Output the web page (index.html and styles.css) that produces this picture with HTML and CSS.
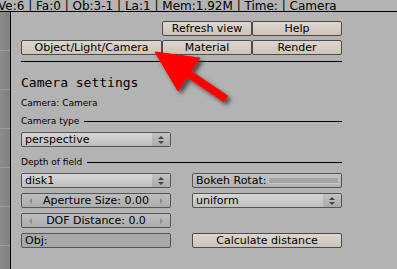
FILE: index.html
```html
<!DOCTYPE html>
<html>
  <head>
    <title>Camera settings</title>
    <link rel="stylesheet" href="styles.css">
  </head>
  <body>
    <div class="screen">
      <div class="info">Ve:6 | Fa:0 | Ob:3-1 | La:1 | Mem:1.92M | Time: | Camera</div>
      <div class="main">
        <div class="sidebar"></div>
        <div class="panel">
          <div class="row row-right">
            <button class="btn btn-90">Refresh view</button>
            <button class="btn btn-90">Help</button>
          </div>
          <div class="row">
            <button class="btn btn-wide">Object/Light/Camera</button>
            <button class="btn btn-90">Material</button>
            <button class="btn btn-90">Render</button>
          </div>
          <div class="rule"></div>
          <div class="heading">Camera settings</div>
          <div class="caption">Camera: Camera</div>
          <div class="group">Camera type</div>
          <div class="grid">
            <div class="menu">perspective<span class="menu-arrows"></span></div>
          </div>
          <div class="group group-next">Depth of field</div>
          <div class="grid">
            <div class="menu">disk1<span class="menu-arrows"></span></div>
            <div class="slider">
              <span class="slider-label">Bokeh Rotat:</span>
              <span class="slider-track"></span>
            </div>
            <div class="num"><span class="num-arrow left"></span>Aperture Size: 0.00<span class="num-arrow right"></span></div>
            <div class="menu">uniform<span class="menu-arrows"></span></div>
            <div class="num"><span class="num-arrow left"></span>DOF Distance: 0.0<span class="num-arrow right"></span></div>
            <div></div>
            <div class="text-field">Obj:</div>
            <button class="btn">Calculate distance</button>
          </div>
        </div>
      </div>
      <svg class="arrow" width="397" height="269" viewBox="0 0 397 269">
        <defs>
          <filter id="shadow" x="-20%" y="-20%" width="150%" height="150%">
            <feDropShadow dx="3" dy="3" stdDeviation="2" flood-color="#333" flood-opacity="0.8"/>
          </filter>
        </defs>
        <g filter="url(#shadow)" fill="#ff0000" stroke="#ff0000">
          <line x1="186" y1="72" x2="226" y2="99" stroke-width="8"/>
          <polygon points="155,52 200,58 178,91" stroke-width="1"/>
        </g>
      </svg>
    </div>
  </body>
</html>
```

FILE: styles.css
```css
body {
  margin: 0;
  background: #b3b3b3;
  font-family: "DejaVu Sans", sans-serif;
  color: #000;
}

.screen {
  position: relative;
  width: 397px;
  height: 269px;
  overflow: hidden;
  background: #b3b3b3;
}

/* info header, clipped at the top like the original window */
.info {
  height: 12px;
  padding-top: 2px;
  box-sizing: border-box;
  line-height: 8px;
  font-size: 12px;
  white-space: nowrap;
  overflow: hidden;
  margin-left: -2px;
  border-bottom: 1px solid #000;
}

.main {
  display: flex;
  height: 257px;
}

.sidebar {
  width: 10px;
  border-right: 1px solid #000;
  background:
    repeating-linear-gradient(180deg, transparent 0 38px, #999 38px 39px),
    linear-gradient(90deg, #8c8c8c, #808080);
}

.panel {
  width: 321px;
  padding: 9px 0 0 10px;
}

.row {
  display: flex;
  margin-bottom: 4px;
}

.row-right {
  justify-content: flex-end;
}

.btn {
  height: 15px;
  margin: 0;
  padding: 0;
  border: 1px solid #4b4b4b;
  border-radius: 2px;
  background: linear-gradient(#ded6ce, #cdc3b9);
  font-family: "DejaVu Sans", sans-serif;
  font-size: 11px;
  line-height: 13px;
  color: #000;
  box-sizing: border-box;
}

.btn-90 {
  width: 90px;
}

.btn-wide {
  width: 141px;
}

.rule {
  height: 1px;
  background: #000;
  margin-top: 6px;
}

.heading {
  font-family: "DejaVu Sans Mono", monospace;
  font-size: 13px;
  line-height: 15px;
  margin-top: 13px;
}

.caption {
  font-size: 9px;
  line-height: 11px;
  margin-top: 8px;
}

.group {
  display: flex;
  align-items: center;
  font-size: 9px;
  line-height: 11px;
  margin-top: 7px;
}

.group-next {
  margin-top: 10px;
}

.group::after {
  content: "";
  flex: 1;
  height: 1px;
  background: #000;
  margin-left: 5px;
}

.grid {
  display: grid;
  grid-template-columns: 150px 150px;
  column-gap: 21px;
  row-gap: 5px;
  margin-top: 5px;
}

.grid .btn {
  width: 150px;
}

.menu,
.num,
.slider,
.text-field {
  position: relative;
  height: 15px;
  box-sizing: border-box;
  border: 1px solid #555;
  border-radius: 2px;
  font-size: 11px;
  line-height: 13px;
  white-space: nowrap;
  overflow: hidden;
}

.menu {
  padding-left: 3px;
  background: linear-gradient(#d6d6d6, #bebebe);
}

.menu-arrows {
  position: absolute;
  right: 0;
  top: 0;
  bottom: 0;
  width: 18px;
  background: linear-gradient(#c2c2c2, #ababab);
}

.menu-arrows::before,
.menu-arrows::after {
  content: "";
  position: absolute;
  left: 6px;
  border-left: 3px solid transparent;
  border-right: 3px solid transparent;
}

.menu-arrows::before {
  top: 3px;
  border-bottom: 3px solid #444;
}

.menu-arrows::after {
  top: 8px;
  border-top: 3px solid #444;
}

.num {
  text-align: center;
  background: linear-gradient(#bdbdbd, #adadad);
}

.num-arrow {
  position: absolute;
  top: 4px;
  border-top: 3px solid transparent;
  border-bottom: 3px solid transparent;
}

.num-arrow.left {
  left: 7px;
  border-right: 3px solid #8a8a8a;
}

.num-arrow.right {
  right: 7px;
  border-left: 3px solid #8a8a8a;
}

.slider {
  display: flex;
  align-items: center;
  padding-left: 3px;
  background: linear-gradient(#c2c2c2, #b0b0b0);
}

.slider-label {
  width: 72px;
  overflow: hidden;
  flex-shrink: 0;
}

.slider-track {
  width: 69px;
  height: 5px;
  border: 1px solid #c4c4c4;
  background: #a3a3a3;
}

.text-field {
  padding-left: 3px;
  background: #a9a9a9;
}

.arrow {
  position: absolute;
  left: 0;
  top: 0;
  pointer-events: none;
}
```
